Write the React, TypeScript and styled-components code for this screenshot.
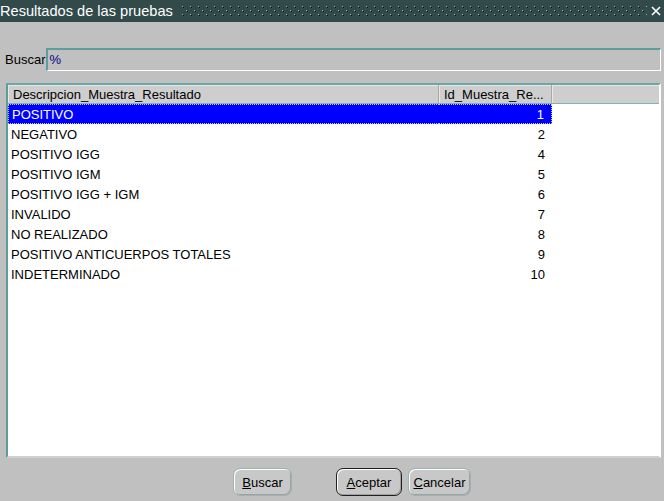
import React from "react";
import styled, { createGlobalStyle } from "styled-components";

const Global = createGlobalStyle`
  html, body { margin: 0; padding: 0; background: #c0c0c0; }
  body { font-family: "Liberation Sans", Arial, sans-serif; font-size: 13px; }
`;

const Window = styled.div`
  width: 664px;
  height: 501px;
  background: #c0c0c0;
  display: flex;
  flex-direction: column;
  overflow: hidden;
`;

const TitleBar = styled.div`
  height: 22px;
  background: #324a4a;
  display: flex;
  align-items: center;
  color: #ffffff;
  font-size: 14.6px;
  padding-right: 2px;
`;

const TitleText = styled.span`
  white-space: nowrap;
  padding-right: 9px;
  line-height: 22px;
`;

const Pattern = styled.svg`
  flex: 1;
  height: 12px;
  margin-top: 1px;
`;

const CloseBtn = styled.svg`
  width: 10px;
  height: 10px;
  margin-left: 4px;
  margin-right: 1px;
`;

const SearchRow = styled.div`
  display: flex;
  align-items: center;
  margin-top: 26px;
  padding-left: 5px;
  padding-right: 3px;
  height: 23px;
`;

const Label = styled.span`
  color: #000;
  font-size: 13px;
  margin-right: 1px;
`;

const Field = styled.div`
  flex: 1;
  height: 23px;
  box-sizing: border-box;
  border-top: 2px solid #5f9c9c;
  border-left: 2px solid #5f9c9c;
  border-right: 1px solid #ffffff;
  border-bottom: 1px solid #ffffff;
  color: #00008b;
  font-size: 13px;
  line-height: 20px;
  padding-left: 1px;
`;

const ListFrame = styled.div`
  margin: 12px 3px 0 6px;
  height: 375px;
  box-sizing: border-box;
  border-top: 2px solid #6aa8a8;
  border-left: 2px solid #5f9c9c;
  border-right: 2px solid #ffffff;
  border-bottom: 2px solid #d0d0d0;
  background: #ffffff;
  display: flex;
  flex-direction: column;
`;

const Grid = styled.div`
  display: grid;
  grid-template-columns: 431px 113px 1fr;
`;

const HeaderCell = styled.div<{ $last?: boolean }>`
  height: 18px;
  background: #cecece;
  border-bottom: 1px solid #7fb2b2;
  border-right: ${(p) => (p.$last ? "none" : "1px solid #a8a8a8")};
  box-shadow: inset 1px 1px 0 #e8e8e8;
  color: #000;
  font-size: 13px;
  line-height: 19px;
  padding-left: 5px;
  white-space: nowrap;
  overflow: hidden;
`;

const Cell = styled.div<{ $sel?: boolean; $num?: boolean; $pos?: "l" | "r" }>`
  height: 20px;
  box-sizing: border-box;
  line-height: 17px;
  padding-top: 1px;
  font-size: 13px;
  white-space: nowrap;
  color: ${(p) => (p.$sel ? "#ffffff" : "#000000")};
  background: ${(p) => (p.$sel ? "#0000ff" : "transparent")};
  text-align: ${(p) => (p.$num ? "right" : "left")};
  padding-right: ${(p) => (p.$num ? "7px" : "0")};
  padding-left: ${(p) => (p.$num ? "0" : "3px")};
  border-top: ${(p) => (p.$sel ? "1px dotted #c8c8ff" : "1px solid transparent")};
  border-bottom: ${(p) => (p.$sel ? "1px dotted #c8c8ff" : "1px solid transparent")};
  border-left: ${(p) => (p.$sel && p.$pos === "l" ? "1px dotted #c8c8ff" : "none")};
  border-right: ${(p) => (p.$sel && p.$pos === "r" ? "1px dotted #c8c8ff" : "none")};
`;

const Empty = styled.div`
  height: 20px;
`;

const ButtonRow = styled.div`
  display: flex;
  align-items: center;
  margin-top: 10px;
  padding-left: 233px;
  height: 28px;
`;

const Button = styled.button<{ $w: number; $def?: boolean; $gap?: number }>`
  width: ${(p) => p.$w}px;
  height: 28px;
  margin-left: ${(p) => p.$gap ?? 0}px;
  border-radius: 7px;
  background: #c8c8c8;
  font-family: "Liberation Sans", Arial, sans-serif;
  font-size: 13px;
  color: #000;
  padding: 0;
  border: 1px solid ${(p) => (p.$def ? "#202020" : "#9cb4b4")};
  box-shadow: inset 1px 1px 0 #ffffff, inset -1px -1px 0 #a0a0a0;
  cursor: default;
  u { text-decoration: underline; }
`;

const rows: [string, string][] = [
  ["POSITIVO", "1"],
  ["NEGATIVO", "2"],
  ["POSITIVO IGG", "4"],
  ["POSITIVO IGM", "5"],
  ["POSITIVO IGG + IGM", "6"],
  ["INVALIDO", "7"],
  ["NO REALIZADO", "8"],
  ["POSITIVO ANTICUERPOS TOTALES", "9"],
  ["INDETERMINADO", "10"],
];

export default function App() {
  return (
    <Window>
      <Global />
      <TitleBar>
        <TitleText>Resultados de las pruebas</TitleText>
        <Pattern>
          <defs>
            <pattern id="dots" width="8" height="8" patternUnits="userSpaceOnUse">
              <rect x="0" y="0" width="1" height="1" fill="#7cc0c0" />
              <rect x="1" y="1" width="1" height="1" fill="#0a1414" />
              <rect x="4" y="4" width="1" height="1" fill="#7cc0c0" />
              <rect x="5" y="5" width="1" height="1" fill="#0a1414" />
            </pattern>
          </defs>
          <rect x="0" y="0" width="100%" height="12" fill="url(#dots)" />
        </Pattern>
        <CloseBtn viewBox="0 0 10 10">
          <path d="M1 1 L9 9 M9 1 L1 9" stroke="#ffffff" strokeWidth="1.6" />
        </CloseBtn>
      </TitleBar>
      <SearchRow>
        <Label>Buscar</Label>
        <Field>%</Field>
      </SearchRow>
      <ListFrame>
        <Grid>
          <HeaderCell>Descripcion_Muestra_Resultado</HeaderCell>
          <HeaderCell>Id_Muestra_Re...</HeaderCell>
          <HeaderCell $last />
          {rows.map(([d, n], i) => (
            <React.Fragment key={d}>
              <Cell $sel={i === 0} $pos="l">{d}</Cell>
              <Cell $sel={i === 0} $num $pos="r">{n}</Cell>
              <Empty />
            </React.Fragment>
          ))}
        </Grid>
      </ListFrame>
      <ButtonRow>
        <Button $w={59}>
          <u>B</u>uscar
        </Button>
        <Button $w={66} $def $gap={44}>
          <u>A</u>ceptar
        </Button>
        <Button $w={63} $gap={6}>
          <u>C</u>ancelar
        </Button>
      </ButtonRow>
    </Window>
  );
}
